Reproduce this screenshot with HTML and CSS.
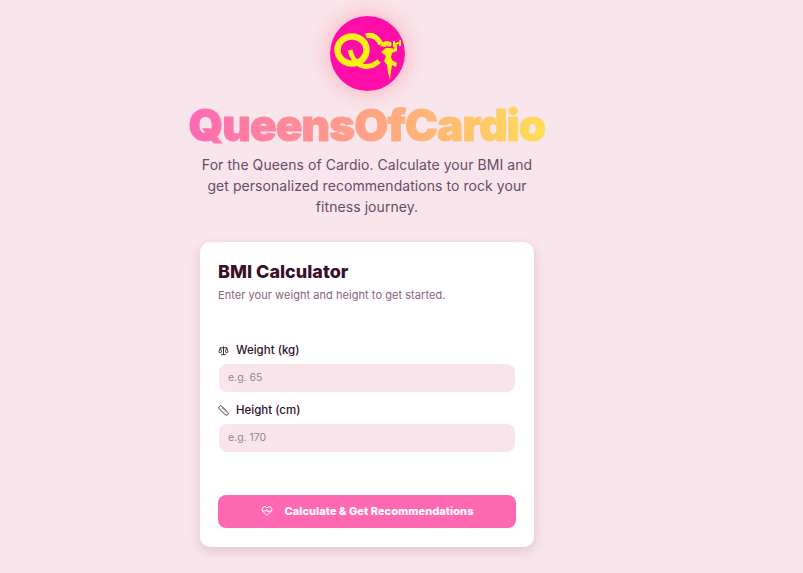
FILE: index.html
```html
<!DOCTYPE html>
<html lang="en">
<head>
  <meta charset="UTF-8">
  <title>QueensOfCardio</title>
  <link rel="stylesheet" href="styles.css">
</head>
<body>

  <div class="container">
    <div class="logo">
      <svg viewBox="0 0 75 75" width="75" height="75">
        <circle cx="37.5" cy="37.5" r="37.5" fill="#ff0da8"/>
        <g fill="none" stroke="#f8f016">
          <ellipse cx="22" cy="34" rx="14.5" ry="13.5" stroke-width="6.5"/>
          <path d="M20 34 C22 42 27 50 36 50.5 C41 50.5 45 49 49 45" stroke-width="5"/>
          <path d="M36 20 C42 18 47 21 51 28" stroke-width="5"/>
        </g>
        <g fill="#f8f016">
          <circle cx="59" cy="28" r="2.6"/>
          <path d="M50 30 C52 26 55 25 58 25 L56 31 Z"/>
          <path d="M56 32 L61 32 L64 33 L65 29 L67 29 L67 35 L62 37 L61 41 L62 44 L67 47 L66 51 L62 49 L61 55 L60 64 L58 56 L57 49 L54 45 L56 40 L51 36 Z"/>
          <path d="M63 25 L65 25 L65 27 L69 26 L69 24 L71 24 L71 30 L69 30 L69 28 L65 29 L65 31 L63 31 Z"/>
        </g>
      </svg>
    </div>

    <h1 class="brand">QueensOfCardio</h1>
    <p class="intro">For the Queens of Cardio. Calculate your BMI and get personalized recommendations to rock your fitness journey.</p>

    <div class="card">
      <h2>BMI Calculator</h2>
      <p class="hint">Enter your weight and height to get started.</p>

      <form class="bmi-form">
        <div class="fields">
          <div class="field">
            <label for="weight">
              <svg class="label-icon" viewBox="0 0 24 24"><path d="M12 3v18M7 21h10M5 6h14M5 6l-3 9a3.2 3.2 0 0 0 6 0zM19 6l-3 9a3.2 3.2 0 0 0 6 0z"/></svg>
              Weight (kg)
            </label>
            <input id="weight" type="text" placeholder="e.g. 65">
          </div>
          <div class="field">
            <label for="height">
              <svg class="label-icon" viewBox="0 0 24 24"><path d="M8 2.5 21.5 16a3 3 0 0 1 0 4.2l-1.3 1.3a3 3 0 0 1-4.2 0L2.5 8a3 3 0 0 1 0-4.2l1.3-1.3a3 3 0 0 1 4.2 0zM9 8l2-2M12 11l2-2M15 14l2-2"/></svg>
              Height (cm)
            </label>
            <input id="height" type="text" placeholder="e.g. 170">
          </div>
        </div>
        <button type="button" class="btn">
          <svg class="btn-icon" viewBox="0 0 24 24"><path d="M12 21 3.5 12.5a5.5 5.5 0 0 1 8.5-7 5.5 5.5 0 0 1 8.5 7z"/><path d="M4 12h5l2-3 2 5 1.5-2H20"/></svg>
          Calculate &amp; Get Recommendations
        </button>
      </form>
    </div>
  </div>

</body>
</html>
```

FILE: styles.css
```css
body {
  font-family: Inter, "Open Sans", sans-serif;
  margin: 0;
  background-color: #f9e6ec;
  height: 573px;
  overflow: hidden;
}

.container {
  width: 734px;
  padding-top: 16px;
  display: flex;
  flex-direction: column;
  align-items: center;
}

.logo {
  width: 75px;
  height: 75px;
  border-radius: 50%;
  box-shadow: 0 0 22px rgba(255, 105, 130, 0.5);
}

.logo svg {
  display: block;
}

.brand {
  margin: 9px 0 0;
  font-size: 44px;
  line-height: 50px;
  font-weight: 900;
  letter-spacing: -0.9px;
  -webkit-text-stroke: 1px transparent;
  background: linear-gradient(to right, #ff69b4, #ffdd57);
  -webkit-background-clip: text;
  background-clip: text;
  color: transparent;
}

.intro {
  width: 340px;
  margin: 4px 0 0;
  font-size: 14px;
  line-height: 21px;
  letter-spacing: 0.06px;
  text-align: center;
  color: #6b4a68;
}

.card {
  box-sizing: border-box;
  width: 334px;
  height: 305px;
  margin-top: 25px;
  padding: 18px;
  background-color: white;
  border-radius: 10px;
  box-shadow: 0 4px 12px rgba(130, 60, 90, 0.2);
}

h2 {
  margin: 0;
  font-size: 18px;
  line-height: 24px;
  font-weight: 800;
  color: #3a0f2a;
}

.hint {
  margin: 3px 0 0;
  font-size: 11px;
  line-height: 16px;
  letter-spacing: 0.05px;
  color: #8a6480;
}

.bmi-form {
  margin-top: 38px;
}

.fields {
  display: flex;
  flex-direction: column;
  gap: 9px;
}

.field label {
  display: flex;
  align-items: center;
  gap: 7px;
  height: 18px;
  font-size: 11.5px;
  font-weight: 500;
  color: #2e1030;
}

.label-icon {
  width: 11px;
  height: 11px;
  fill: none;
  stroke: #3a1a30;
  stroke-width: 2;
}

.field input {
  box-sizing: border-box;
  display: block;
  width: 296px;
  height: 28px;
  margin: 5px 0 0 1px;
  padding: 0 9px 2px;
  border: none;
  border-radius: 8px;
  background-color: #f9e6ec;
  font-family: inherit;
  font-size: 10.5px;
}

.field input::placeholder {
  color: #a08094;
}

.btn {
  display: flex;
  align-items: center;
  justify-content: center;
  gap: 12px;
  width: 298px;
  height: 33px;
  margin-top: 43px;
  padding: 0 0 2px;
  border: none;
  border-radius: 8px;
  background-color: #ff69b4;
  color: white;
  font-family: inherit;
  font-size: 11px;
  font-weight: 800;
  letter-spacing: 0.05px;
  cursor: pointer;
}

.btn-icon {
  width: 12px;
  height: 12px;
  fill: none;
  stroke: white;
  stroke-width: 2;
}
```
